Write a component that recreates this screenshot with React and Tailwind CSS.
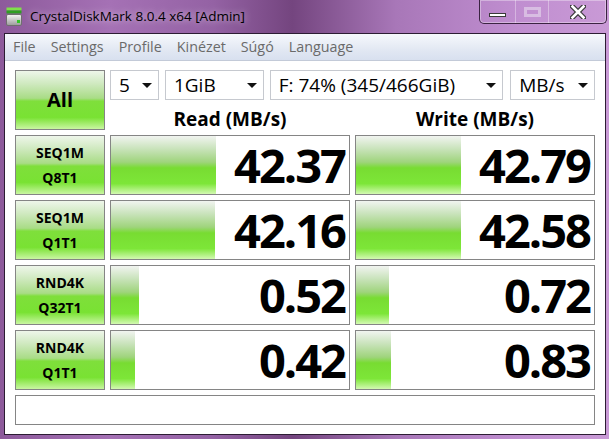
import { useState } from 'react'

const rows = [
  { a: 'SEQ1M', b: 'Q8T1', read: '42.37', readBar: 105, write: '42.79', writeBar: 105 },
  { a: 'SEQ1M', b: 'Q1T1', read: '42.16', readBar: 104, write: '42.58', writeBar: 105 },
  { a: 'RND4K', b: 'Q32T1', read: '0.52', readBar: 28, write: '0.72', writeBar: 33 },
  { a: 'RND4K', b: 'Q1T1', read: '0.42', readBar: 24, write: '0.83', writeBar: 35 },
]

const menu = ['File', 'Settings', 'Profile', 'Kinézet', 'Súgó', 'Language']

const greenBtn =
  'bg-[linear-gradient(#eef6ea_0%,#cfe9bf_22%,#a9dc86_47%,#7fdf3b_52%,#79e233_80%,#c9f6a2_100%)]'
const greenBar =
  'bg-[linear-gradient(#f1f4f0_0%,#c9e3bb_22%,#9fd47c_45%,#78dc32_55%,#7de638_82%,#d3f9b2_100%)]'

function AppIcon() {
  return (
    <svg width="17" height="20" viewBox="0 0 17 20">
      <rect x="0.5" y="0.5" width="15" height="3" fill="#7fe04a" />
      <rect x="0.5" y="3.5" width="15" height="3" fill="#2f9f22" />
      <defs>
        <linearGradient id="body" x1="0" y1="0" x2="0" y2="1">
          <stop offset="0" stopColor="#f6f6f6" />
          <stop offset="1" stopColor="#9a9a9a" />
        </linearGradient>
      </defs>
      <rect x="0.5" y="7.5" width="15" height="11" rx="1.5" fill="url(#body)" stroke="#6f6f6f" />
      <rect x="11" y="13" width="3" height="3" fill="#35c42a" />
    </svg>
  )
}

function CaptionButtons() {
  return (
    <div className="mr-[2px] flex h-[24px] rounded-b-[5px] border border-t-0 border-[#3b2342] shadow-[inset_0_0_0_1px_rgba(255,255,255,0.35)]">
      <div className="flex w-[36px] items-center justify-center border-r border-[rgba(255,255,255,0.35)] pt-[6px]">
        <div className="h-[4px] w-[17px] border border-[#3a3a3a] bg-white" />
      </div>
      <div className="flex w-[33px] items-center justify-center border-r border-[rgba(255,255,255,0.35)]">
        <div className="h-[10px] w-[17px] border-[3px] border-[rgba(235,225,240,0.55)]" />
      </div>
      <div className="flex w-[57px] items-center justify-center">
        <svg width="16" height="14" viewBox="0 0 16 14">
          <path d="M2 1 L14 13 M14 1 L2 13" stroke="#3a3a3a" strokeWidth="5" strokeLinecap="square" />
          <path d="M2.5 1.5 L13.5 12.5 M13.5 1.5 L2.5 12.5" stroke="#ffffff" strokeWidth="2.6" strokeLinecap="square" />
        </svg>
      </div>
    </div>
  )
}

function Select({ value, w }) {
  return (
    <div className={`flex h-[30px] items-center justify-between border border-[#c6c9cf] bg-white pl-[8px] pr-[6px] ${w}`}>
      <span className="text-[19px] leading-none text-black">{value}</span>
      <svg width="10" height="5" viewBox="0 0 10 5">
        <path d="M0 0 H10 L5 5 Z" fill="#111" />
      </svg>
    </div>
  )
}

function Cell({ value, bar }) {
  return (
    <div className="flex h-[60px] items-stretch border border-[#858585] bg-white">
      <div className={greenBar} style={{ width: bar }} />
      <span className="ml-auto self-center pr-[4px] text-[47px] font-bold leading-none tracking-[-2px] text-black">
        {value}
      </span>
    </div>
  )
}

export default function App() {
  const [active] = useState(true)
  return (
    <div
      className="flex h-[439px] w-[609px] flex-col overflow-hidden bg-[linear-gradient(90deg,#8d5a9b_0%,#a571b5_18%,#9462a4_35%,#74457f_48%,#a877b8_65%,#c08ed0_85%,#c99ad6_100%)] font-['Open_Sans','Noto_Sans',sans-serif]"
    >
      <div className="flex h-[33px] shrink-0 items-start justify-between">
        <div className="flex items-center pl-[6px] pt-[7px]">
          <AppIcon />
          <span className="ml-[7px] text-[13.5px] leading-none text-black [text-shadow:0_0_7px_rgba(255,255,255,0.7)]">
            CrystalDiskMark 8.0.4 x64 [Admin]
          </span>
        </div>
        {active && <CaptionButtons />}
      </div>

      <div className="ml-[4px] mr-[3px] mb-[4px] flex min-h-0 flex-1 flex-col border border-[#2c1c33] bg-white">
        <div className="flex h-[27px] shrink-0 items-center gap-[15px] border-b border-[#c3cad8] bg-[linear-gradient(#f6f8fc,#e2e8f3_60%,#d8e0ef)] pl-[8px] text-[14.3px] text-[#6a6a6a]">
          {menu.map((m) => (
            <span key={m}>{m}</span>
          ))}
        </div>

        <div className="grid grid-cols-[90px_240px_240px] gap-x-[5px] gap-y-[5px] pl-[10px] pt-[9px]">
          <div className={`flex h-[60px] items-center justify-center border border-[#858585] text-[20px] font-bold text-black ${greenBtn}`}>
            All
          </div>
          <div className="col-span-2 flex h-[60px] flex-col">
            <div className="flex gap-[6px]">
              <Select value="5" w="w-[49px]" />
              <Select value="1GiB" w="w-[99px]" />
              <Select value="F: 74% (345/466GiB)" w="w-[234px]" />
              <Select value="MB/s" w="ml-[1px] w-[85px]" />
            </div>
            <div className="grid flex-1 grid-cols-2 gap-x-[5px]">
              <div className="flex items-center justify-center pt-[8px] text-[19px] font-bold leading-none text-black">Read (MB/s)</div>
              <div className="flex items-center justify-center pt-[8px] text-[19px] font-bold leading-none text-black">Write (MB/s)</div>
            </div>
          </div>

          {rows.map((r) => (
            <div key={r.a + r.b} className="contents">
              <div className={`flex h-[60px] flex-col items-center justify-center border border-[#858585] text-[14px] font-bold leading-[25px] text-black ${greenBtn}`}>
                <span>{r.a}</span>
                <span>{r.b}</span>
              </div>
              <Cell value={r.read} bar={r.readBar} />
              <Cell value={r.write} bar={r.writeBar} />
            </div>
          ))}

          <div className="col-span-3 h-[30px] border border-[#858585] bg-white" />
        </div>
      </div>
    </div>
  )
}
